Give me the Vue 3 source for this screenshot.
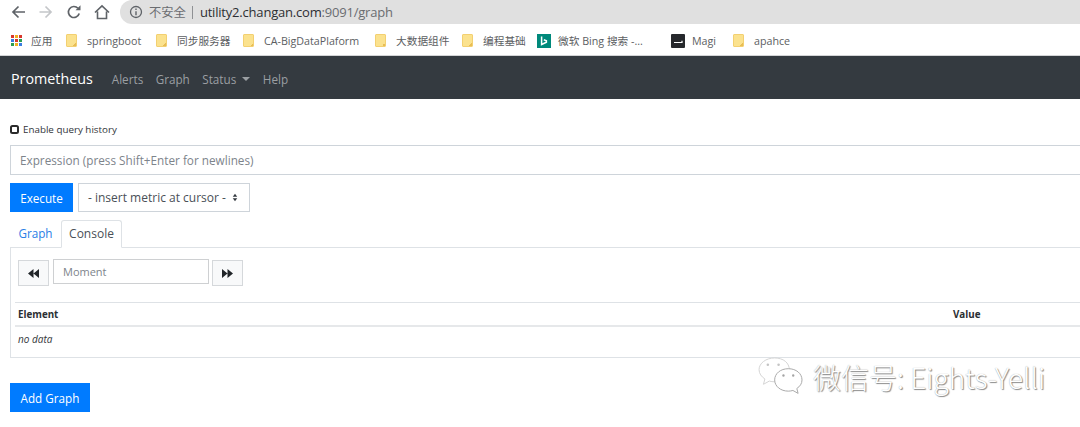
<script setup>
const bookmarks = [
  { label: '应用', kind: 'apps', w: 55 },
  { label: 'springboot', kind: 'folder', w: 90 },
  { label: '同步服务器', kind: 'folder', w: 87 },
  { label: 'CA-BigDataPlaform', kind: 'folder', w: 132 },
  { label: '大数据组件', kind: 'folder', w: 87 },
  { label: '编程基础', kind: 'folder', w: 75 },
  { label: '微软 Bing 搜索 -...', kind: 'bing', w: 134 },
  { label: 'Magi', kind: 'magi', w: 62 },
  { label: 'apahce', kind: 'folder', w: 70 },
]
const appColors = ['#d9372c', '#f2b01e', '#d9372c', '#3a7de0', '#d9372c', '#2e9e4f', '#2e9e4f', '#f2b01e', '#3a7de0']
</script>

<template>
  <div class="page">
    <div class="toolbar">
      <svg class="nav-icon" viewBox="0 0 16 16"><path d="M15 8H3M8.500 2.500 3 8l5.500 5.500" fill="none" stroke="#5f6368" stroke-width="1.700"/></svg>
      <svg class="nav-icon" viewBox="0 0 16 16"><path d="M1.500 8H13M7.500 2.500 13 8l-5.500 5.500" fill="none" stroke="#c4c6c9" stroke-width="1.700"/></svg>
      <svg class="nav-icon" viewBox="0 0 16 16"><path d="M13.200 9.500A5.500 5.500 0 1 1 12 4.300" fill="none" stroke="#5f6368" stroke-width="1.700"/><path d="M9.500 6.200h5v-5z" fill="#5f6368"/></svg>
      <svg class="nav-icon" viewBox="0 0 16 16"><path d="M1 8.500 8 1.800l7 6.700M3.500 7.500V14.500h9V7.500" fill="none" stroke="#5f6368" stroke-width="1.600"/></svg>
      <div class="omnibox">
        <svg class="info" viewBox="0 0 14 14"><circle cx="7" cy="7" r="5.500" fill="none" stroke="#5f6368" stroke-width="1.300"/><path d="M7 6.200v4M7 3.600v1.500" stroke="#5f6368" stroke-width="1.400"/></svg>
        <span class="insecure">不安全</span>
        <span class="sep"></span>
        <span class="url">utility2.changan.com<span class="url-rest">:9091/graph</span></span>
      </div>
    </div>

    <div class="bookmarks">
      <div v-for="b in bookmarks" :key="b.label" class="bookmark" :style="{ width: b.w + 'px' }">
        <span v-if="b.kind === 'apps'" class="apps">
          <i v-for="(c, i) in appColors" :key="i" :style="{ background: c }"></i>
        </span>
        <span v-else-if="b.kind === 'folder'" class="folder"></span>
        <svg v-else-if="b.kind === 'bing'" class="fav" viewBox="0 0 14 14"><rect width="14" height="14" fill="#00897b"/><path d="M4.600 2.500v8l4.800-2.300V6.700L6.800 5.800" fill="none" stroke="#fff" stroke-width="1.500"/></svg>
        <svg v-else class="fav" viewBox="0 0 14 14"><rect width="14" height="14" rx="1" fill="#26282c"/><path d="M3 8.500h8V6.800" fill="none" stroke="#fff" stroke-width="1.200"/></svg>
        <span class="bm-label">{{ b.label }}</span>
      </div>
    </div>

    <nav class="navbar">
      <span class="brand">Prometheus</span>
      <a class="nav-link">Alerts</a>
      <a class="nav-link">Graph</a>
      <a class="nav-link">Status<i class="caret"></i></a>
      <a class="nav-link">Help</a>
    </nav>

    <main class="content">
      <label class="history"><span class="check"></span>Enable query history</label>
      <div class="expr">Expression (press Shift+Enter for newlines)</div>
      <div class="actions">
        <button class="btn primary">Execute</button>
        <div class="metric">- insert metric at cursor -
          <svg class="updown" viewBox="0 0 8 12"><path d="M4 1 7 5H1zM4 11 1 7h6z" fill="#343a40"/></svg>
        </div>
      </div>
      <div class="tabs">
        <span class="tab">Graph</span>
        <span class="tab active">Console</span>
      </div>
      <section class="panel">
        <div class="moment-row">
          <button class="step">
            <svg viewBox="0 0 10 8"><path d="M5 0v8L0 4zM10 0v8L5 4z" fill="#212529"/></svg>
          </button>
          <div class="moment">Moment</div>
          <button class="step">
            <svg viewBox="0 0 10 8"><path d="M0 0v8l5-4zM5 0v8l5-4z" fill="#212529"/></svg>
          </button>
        </div>
        <div class="thead">
          <span class="col-el">Element</span>
          <span>Value</span>
        </div>
        <div class="tbody">no data</div>
      </section>
      <button class="btn primary add">Add Graph</button>
    </main>

    <div class="watermark">
      <svg class="wechat" viewBox="0 0 50 42">
        <path d="M18 2C9 2 2 7.500 2 14c0 4 2.500 7.300 6 9.500L6.500 29l6-3.300c1.800.5 3.500.7 5.500.7 9 0 15-5.500 15-12.400S27 2 18 2z" fill="#fff" stroke="#d4d4d4"/>
        <path d="M32 13c-8 0-14 5-14 11.500S24 36 32 36c1.700 0 3.200-.3 4.700-.7l5.300 3-1.300-5c3.200-2.100 5.300-5 5.300-8.800C46 18 40 13 32 13z" fill="#fff" stroke="#a8a8a8"/>
        <circle cx="11" cy="9" r="1.300" fill="#c4c4c4"/><circle cx="22" cy="9" r="1.300" fill="#c4c4c4"/>
        <circle cx="27" cy="20" r="1.200" fill="#a4a4a4"/><circle cx="37" cy="20" r="1.200" fill="#a4a4a4"/>
      </svg>
      <span class="wm-text">微信号: Eights-Yelli</span>
    </div>
  </div>
</template>

<style scoped>
.page {
  position: relative;
  width: 1080px;
  height: 427px;
  overflow: hidden;
  background: #fff;
  font-family: "Open Sans", "Noto Sans CJK SC", sans-serif;
  color: #212529;
}
.toolbar {
  height: 24px;
  display: flex;
  align-items: center;
  padding-left: 10px;
  gap: 12px;
  background: #fff;
}
.nav-icon { width: 16px; height: 16px; flex: none; }
.omnibox {
  flex: 1;
  height: 24px;
  margin-left: -2px;
  margin-right: -20px;
  border-radius: 12px 0 0 12px;
  background: #e0e0e0;
  display: flex;
  align-items: center;
  padding-left: 9px;
}
.info { width: 14px; height: 14px; flex: none; }
.insecure { margin-left: 6px; font-size: 12.300px; color: #6a6c70; }
.sep { width: 1px; height: 13px; background: #8f9194; margin: 0 7px 0 6px; }
.url { font-size: 13px; color: #2d2f33; letter-spacing: -.2px; }
.url-rest { color: #6a6c70; }

.bookmarks {
  height: 32px;
  box-sizing: border-box;
  display: flex;
  align-items: center;
  padding: 2px 0 0 11px;
  background: #fff;
  border-bottom: 1px solid #d3d4d6;
}
.bookmark { display: flex; align-items: center; flex: none; font-size: 10.700px; color: #5c5e62; white-space: nowrap; }
.bm-label { margin-left: 8px; }
.apps { display: grid; grid-template-columns: repeat(3, 3px); gap: 1px; width: 11px; margin-right: 1px; }
.apps i { width: 3px; height: 3px; display: block; }
.folder {
  width: 11px;
  height: 13px;
  box-sizing: border-box;
  background: linear-gradient(135deg, #fbe28e 85%, #e8bd55 85%);
  border: 1px solid #f3d071;
  border-radius: 1px;
  margin-left: 0;
  margin-right: 2px;
}
.fav { width: 14px; height: 14px; flex: none; margin-right: -1px; }

.navbar {
  height: 43px;
  box-sizing: border-box;
  display: flex;
  align-items: center;
  padding: 2px 0 0 11px;
  background: #343a40;
}
.brand { font-size: 14.300px; color: #fff; margin-right: 19px; }
.nav-link { font-size: 11.700px; color: #9b9fa3; margin-right: 12.500px; display: flex; align-items: center; }
.caret { width: 0; height: 0; margin-left: 6px; border-top: 4px solid #9b9fa3; border-left: 4px solid transparent; border-right: 4px solid transparent; }

.content { padding: 23px 0 0 10px; display: flex; flex-direction: column; align-items: flex-start; }
.history { display: flex; align-items: center; font-size: 9.800px; color: #303438; height: 14px; }
.check { width: 9px; height: 9px; box-sizing: border-box; border: 2px solid #2b2b2b; border-radius: 2.500px; margin-right: 4px; }
.expr {
  margin-top: 9px;
  width: 1090px;
  height: 30px;
  box-sizing: border-box;
  border: 1px solid #ced4da;
  padding-left: 9px;
  line-height: 28px;
  font-size: 11.750px;
  color: #7d848b;
}
.actions { display: flex; gap: 5px; margin-top: 8px; }
.btn {
  border: none;
  color: #fff;
  font-family: inherit;
  font-size: 11.700px;
  padding: 0;
}
.primary { background: #007bff; }
.actions .btn { width: 63px; height: 29px; }
.metric {
  width: 172px;
  height: 29px;
  box-sizing: border-box;
  border: 1px solid #ced4da;
  padding-left: 9px;
  display: flex;
  align-items: center;
  justify-content: space-between;
  padding-right: 11px;
  font-size: 12px;
  color: #495057;
}
.updown { width: 6px; height: 9px; }
.tabs { display: flex; margin-top: 8px; height: 28px; width: 1090px; box-sizing: border-box; border-bottom: 1px solid #dee2e6; }
.tab { width: 51px; box-sizing: border-box; height: 28px; line-height: 26px; text-align: center; font-size: 11.700px; color: #2a80e6; }
.tab.active {
  width: 61px;
  font-size: 12px;
  color: #495057;
  background: #fff;
  border: 1px solid #dee2e6;
  border-bottom: 1px solid #fff;
  border-radius: 3px 3px 0 0;
}
.panel {
  width: 1090px;
  height: 110px;
  box-sizing: border-box;
  border: 1px solid #dee2e6;
  border-top: none;
  padding: 11px 0 0 4px;
}
.moment-row { display: flex; align-items: flex-start; padding-left: 3px; }
.step {
  width: 31px;
  height: 26px;
  margin-top: 1px;
  box-sizing: border-box;
  background: #f8f9fa;
  border: 1px solid #d5d8db;
  display: flex;
  align-items: center;
  justify-content: center;
  padding: 0;
}
.step svg { width: 11px; height: 9px; }
.moment {
  width: 156px;
  height: 25px;
  box-sizing: border-box;
  border: 1px solid #ced0d2;
  margin: 0 3px 0 4px;
  padding-left: 9px;
  line-height: 23px;
  font-size: 11px;
  color: #7d848b;
}
.thead {
  display: flex;
  margin-top: 16px;
  height: 25px;
  box-sizing: border-box;
  border-top: 1px solid #dee2e6;
  border-bottom: 2px solid #e6e8ea;
  align-items: center;
  padding-left: 3px;
  font-size: 9.800px;
  font-weight: 700;
  color: #2b2f33;
}
.col-el { width: 935px; }
.tbody { padding: 5px 0 0 3px; font-size: 10px; font-style: italic; color: #33373b; }
.add { width: 80px; height: 29px; margin-top: 25px; }

.watermark {
  position: absolute;
  left: 757px;
  top: 356px;
  display: flex;
  align-items: center;
}
.wechat { width: 49px; height: 41px; }
.wm-text {
  margin-left: 7px;
  font-size: 28px;
  line-height: 40px;
  color: #fff;
  text-shadow: 1px 1px 1px #888, 0 0 1px #a4a4a4;
  font-family: "Noto Sans CJK SC", sans-serif;
  font-weight: 300;
  white-space: nowrap;
}
</style>
